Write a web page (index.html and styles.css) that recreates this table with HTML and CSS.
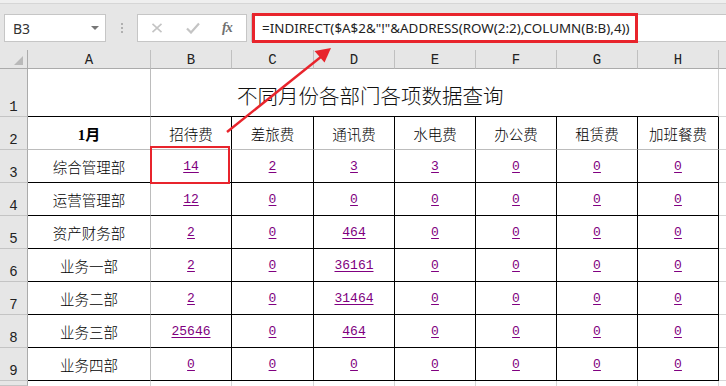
FILE: index.html
```html
<!DOCTYPE html>
<html lang="zh-CN">
<head>
<meta charset="utf-8">
<title>不同月份各部门各项数据查询</title>
<link rel="stylesheet" href="styles.css">
</head>
<body>
<div class="app">
  <div class="toolbar">
    <div class="namebox"><span class="ref">B3</span><span class="caret"></span></div>
    <div class="grip"><i></i><i></i><i></i></div>
    <div class="iconbox">
      <svg class="ico" width="12" height="10" viewBox="0 0 12 10"><path d="M1.5 0.8 L10.5 9.2 M10.5 0.8 L1.5 9.2" stroke="#c4c4c4" stroke-width="1.6" fill="none"/></svg>
      <svg class="ico" width="14" height="12" viewBox="0 0 14 12"><path d="M1 6.5 L5 10.5 L13 1.5" stroke="#c4c4c4" stroke-width="2.2" fill="none"/></svg>
      <span class="fx">fx</span>
    </div>
    <div class="formula"><span class="ftext">=INDIRECT($A$2&amp;"!"&amp;ADDRESS(ROW(2:2),COLUMN(B:B),4))</span></div>
  </div>
  <div class="sheet">
    <div class="corner"><span class="tri"></span></div>
    <div class="ch">A</div><div class="ch">B</div><div class="ch">C</div><div class="ch">D</div><div class="ch">E</div><div class="ch">F</div><div class="ch">G</div><div class="ch">H</div><div class="ch last"></div>

    <div class="rh">1</div>
    <div class="c a r1"></div>
    <div class="c title r1">不同月份各部门各项数据查询</div>
    <div class="c x"></div>

    <div class="rh">2</div>
    <div class="c a r2 bold">1月</div>
    <div class="c r2 k">招待费</div><div class="c r2 k">差旅费</div><div class="c r2 k">通讯费</div><div class="c r2 k">水电费</div><div class="c r2 k">办公费</div><div class="c r2 k">租赁费</div><div class="c r2 k">加班餐费</div>
    <div class="c x"></div>

    <div class="rh">3</div>
    <div class="c a kb">综合管理部</div>
    <div class="c kb v"><u>14</u></div><div class="c kb v"><u>2</u></div><div class="c kb v"><u>3</u></div><div class="c kb v"><u>3</u></div><div class="c kb v"><u>0</u></div><div class="c kb v"><u>0</u></div><div class="c kb v"><u>0</u></div>
    <div class="c x"></div>

    <div class="rh">4</div>
    <div class="c a kb">运营管理部</div>
    <div class="c kb v"><u>12</u></div><div class="c kb v"><u>0</u></div><div class="c kb v"><u>0</u></div><div class="c kb v"><u>0</u></div><div class="c kb v"><u>0</u></div><div class="c kb v"><u>0</u></div><div class="c kb v"><u>0</u></div>
    <div class="c x"></div>

    <div class="rh">5</div>
    <div class="c a kb">资产财务部</div>
    <div class="c kb v"><u>2</u></div><div class="c kb v"><u>0</u></div><div class="c kb v"><u>464</u></div><div class="c kb v"><u>0</u></div><div class="c kb v"><u>0</u></div><div class="c kb v"><u>0</u></div><div class="c kb v"><u>0</u></div>
    <div class="c x"></div>

    <div class="rh">6</div>
    <div class="c a kb">业务一部</div>
    <div class="c kb v"><u>2</u></div><div class="c kb v"><u>0</u></div><div class="c kb v"><u>36161</u></div><div class="c kb v"><u>0</u></div><div class="c kb v"><u>0</u></div><div class="c kb v"><u>0</u></div><div class="c kb v"><u>0</u></div>
    <div class="c x"></div>

    <div class="rh">7</div>
    <div class="c a kb">业务二部</div>
    <div class="c kb v"><u>2</u></div><div class="c kb v"><u>0</u></div><div class="c kb v"><u>31464</u></div><div class="c kb v"><u>0</u></div><div class="c kb v"><u>0</u></div><div class="c kb v"><u>0</u></div><div class="c kb v"><u>0</u></div>
    <div class="c x"></div>

    <div class="rh">8</div>
    <div class="c a kb">业务三部</div>
    <div class="c kb v"><u>25646</u></div><div class="c kb v"><u>0</u></div><div class="c kb v"><u>464</u></div><div class="c kb v"><u>0</u></div><div class="c kb v"><u>0</u></div><div class="c kb v"><u>0</u></div><div class="c kb v"><u>0</u></div>
    <div class="c x"></div>

    <div class="rh">9</div>
    <div class="c a kb">业务四部</div>
    <div class="c kb v"><u>0</u></div><div class="c kb v"><u>0</u></div><div class="c kb v"><u>0</u></div><div class="c kb v"><u>0</u></div><div class="c kb v"><u>0</u></div><div class="c kb v"><u>0</u></div><div class="c kb v"><u>0</u></div>
    <div class="c x"></div>

    <div class="rh"></div>
    <div class="c e"></div><div class="c e"></div><div class="c e"></div><div class="c e"></div><div class="c e"></div><div class="c e"></div><div class="c e"></div><div class="c e"></div><div class="c e x"></div>
  </div>
  <div class="sel-box"></div>
  <div class="fx-box"></div>
  <svg class="arrow" width="726" height="386" viewBox="0 0 726 386">
    <line x1="227" y1="132" x2="322" y2="56" stroke="#e8242c" stroke-width="2.4"/>
    <polygon points="331,48 324.5,62.5 314.5,51" fill="#e8242c"/>
  </svg>
</div>
</body>
</html>
```

FILE: styles.css
```css
* { box-sizing: border-box; margin: 0; padding: 0; }
html, body { width: 726px; height: 386px; overflow: hidden; background: #e6e6e6; }
body { font-family: "Noto Sans CJK SC", sans-serif; }
.app { position: relative; width: 726px; height: 386px; }

.toolbar {
  height: 50px;
  display: flex;
  align-items: flex-start;
  padding: 14px 0 0 4px;
  border-top: 3px solid #efefef;
  position: relative;
}
.toolbar::before {
  content: "";
  position: absolute;
  left: 0; right: 0; top: 0;
  height: 1px;
  background: #d6d6d6;
}
.namebox {
  width: 102px; height: 28px;
  margin-top: -3px;
  background: #fff;
  border: 1px solid #c6c6c6;
  display: flex; align-items: center; justify-content: space-between;
  padding: 0 6px 0 8px;
}
.ref { font-family: "Noto Sans", sans-serif; font-size: 14px; color: #333; }
.caret { width: 0; height: 0; border-left: 4px solid transparent; border-right: 4px solid transparent; border-top: 4px solid #777; }
.grip { width: 31px; height: 28px; margin-top: -3px; display: flex; flex-direction: column; align-items: center; justify-content: center; gap: 2px; }
.grip i { display: block; width: 2px; height: 2px; background: #b0b0b0; }
.iconbox {
  width: 110px; height: 28px;
  margin-top: -3px;
  background: #fff;
  border: 1px solid #c6c6c6;
  display: flex; align-items: center;
  padding-left: 13px;
}
.iconbox .ico { display: block; }
.iconbox .ico:nth-child(2) { margin-left: 23px; }
.fx { margin-left: 22px; font-family: "Liberation Serif", serif; font-style: italic; font-weight: bold; font-size: 14px; color: #707070; letter-spacing: -1px; }
.formula {
  flex: 1; height: 28px;
  margin-top: -3px; margin-left: 4px;
  background: #fff;
  border: 1px solid #c6c6c6;
  border-right: none;
  display: flex; align-items: center;
  padding-left: 10px;
}
.ftext { font-family: "Noto Sans", sans-serif; font-size: 13.4px; color: #222; white-space: nowrap; }

.sheet {
  display: grid;
  grid-template-columns: 28px 123px 81px 82px 81px 81px 81px 81px 81px 1fr;
  grid-template-rows: 19px 48px 33px repeat(7, 33px) 1fr;
  height: 336px;
  background: #fff;
}
.corner { background: #e6e6e6; border-right: 1px solid #ababab; border-bottom: 1px solid #ababab; position: relative; }
.tri { position: absolute; right: 4px; bottom: 3px; width: 0; height: 0; border-left: 9px solid transparent; border-bottom: 9px solid #b9b9b9; }
.ch {
  background: #e6e6e6;
  border-right: 1px solid #c0c0c0;
  border-bottom: 1px solid #ababab;
  font-family: "Liberation Mono", monospace; font-size: 14px; color: #222;
  display: flex; align-items: center; justify-content: center;
  padding-top: 1px;
}
.ch.last { border-right: none; }
.rh {
  background: #e6e6e6;
  border-right: 1px solid #ababab;
  border-bottom: 1px solid #c4c4c4;
  font-family: "Liberation Mono", monospace; font-size: 14px; color: #222;
  display: flex; align-items: flex-end; justify-content: center;
  padding-bottom: 1px;
}

.c {
  border-right: 1px solid #bcbcbc;
  border-bottom: 1px solid #bcbcbc;
  display: flex; align-items: center; justify-content: center;
  font-size: 14.5px; font-weight: 300; color: #000;
  white-space: nowrap;
}
.c.r1 { border-bottom-color: #000; }
.title {
  grid-column: span 7;
  justify-content: flex-start;
  padding-left: 86px;
  padding-top: 4px;
  font-size: 20.5px;
  color: #111;
  border-right-color: #d0d0d0;
}
.c.k { border-right-color: #000; }
.c.kb { border-bottom-color: #000; }
.c.kb:not(.a) { border-right-color: #000; }
.bold { font-family: "Liberation Serif", "Noto Sans CJK SC", serif; font-weight: bold; font-size: 15px; }
.v { font-family: "Liberation Mono", monospace; font-size: 13px; font-weight: normal; color: #800080; padding-top: 1px; }
.v u { text-underline-offset: 2px; }
.c.x { border-right: none; border-bottom-color: #d6d6d6; }
.c.e { border-bottom: none; border-right-color: #d6d6d6; }
.c.e.x { border-right: none; }

.sel-box { position: absolute; left: 150px; top: 146px; width: 80px; height: 38px; border: 2px solid #e8242c; }
.fx-box { position: absolute; left: 252px; top: 13px; width: 386px; height: 30px; border: 3px solid #e8242c; }
.arrow { position: absolute; left: 0; top: 0; pointer-events: none; }
```
